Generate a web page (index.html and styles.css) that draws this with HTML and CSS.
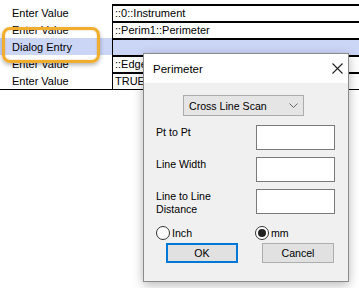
FILE: index.html
```html
<!DOCTYPE html>
<html lang="en">
<head>
  <meta charset="UTF-8">
  <title>Perimeter Dialog</title>
  <link rel="stylesheet" href="styles.css">
</head>
<body>
  <div class="grid">
    <div class="row">
      <div class="label">Enter Value</div>
      <div class="value">::0::Instrument</div>
    </div>
    <div class="row">
      <div class="label">Enter Value</div>
      <div class="value">::Perim1::Perimeter</div>
    </div>
    <div class="row selected">
      <div class="label">Dialog Entry</div>
      <div class="value"></div>
    </div>
    <div class="row">
      <div class="label">Enter Value</div>
      <div class="value">::Edge</div>
    </div>
    <div class="row last">
      <div class="label">Enter Value</div>
      <div class="value">TRUE</div>
    </div>
  </div>

  <div class="highlight"></div>

  <div class="dialog">
    <div class="titlebar">
      <span class="title">Perimeter</span>
      <svg class="close" width="11" height="11" viewBox="0 0 11 11">
        <path d="M0.5 0.5 L10.5 10.5 M10.5 0.5 L0.5 10.5" stroke="#222" stroke-width="1.1" fill="none"/>
      </svg>
    </div>
    <div class="dialog-body">
      <div class="combo">
        <span>Cross Line Scan</span>
        <svg width="9" height="5" viewBox="0 0 9 5">
          <path d="M0.5 0.5 L4.5 4.5 L8.5 0.5" stroke="#666" stroke-width="1" fill="none"/>
        </svg>
      </div>

      <div class="fields">
        <div class="field-label">Pt to Pt</div>
        <div class="textbox"></div>
        <div class="field-label">Line Width</div>
        <div class="textbox"></div>
        <div class="field-label">Line to Line<br>Distance</div>
        <div class="textbox"></div>
      </div>

      <div class="radios">
        <div class="radio"><span class="dot"></span>Inch</div>
        <div class="radio"><span class="dot checked"></span>mm</div>
      </div>

      <div class="buttons">
        <button class="btn default">OK</button>
        <button class="btn">Cancel</button>
      </div>
    </div>
  </div>
</body>
</html>
```

FILE: styles.css
```css
* { box-sizing: border-box; }

body {
  margin: 0;
  padding-top: 4px;
  background: #fff;
  color: #000;
  font-family: 'Liberation Sans', Arial, sans-serif;
  font-size: 11px;
  width: 359px;
  height: 288px;
  overflow: hidden;
  position: relative;
}

/* property grid */
.grid {
  border-bottom: 1px solid #000;
}

.row {
  display: grid;
  grid-template-columns: 112px 1fr;
  height: 17px;
}

.row .label {
  padding-left: 12px;
  padding-top: 3px;
  line-height: 13px;
}

.row .value {
  border-left: 1px solid #000;
  border-top: 2px solid #000;
  padding-left: 2px;
  padding-top: 1px;
  line-height: 13px;
}

.row.selected {
  background: #cbd5f6;
}

/* callout around the selected row */
.highlight {
  position: absolute;
  left: 2px;
  top: 27px;
  width: 98px;
  height: 36px;
  border: 3px solid #f1ae2e;
  border-radius: 8px;
  box-shadow: 0 2px 4px rgba(0, 0, 0, 0.3), inset 0 0 2px rgba(180, 110, 0, 0.4);
}

/* dialog window */
.dialog {
  position: absolute;
  left: 143px;
  top: 53px;
  width: 206px;
  height: 229px;
  border: 1px solid #8a8a8a;
  background: #f0f0f0;
  box-shadow: 0 3px 10px rgba(0, 0, 0, 0.28);
  display: flex;
  flex-direction: column;
}

.titlebar {
  height: 29px;
  background: #fff;
  display: flex;
  align-items: center;
  justify-content: space-between;
  padding: 0 5px 0 9px;
}

.title {
  font-size: 11.5px;
}

.dialog-body {
  padding: 12px 0 0 12px;
  font-size: 10.6px;
}

.combo {
  margin-left: 27px;
  width: 121px;
  height: 21px;
  background: #e5e5e5;
  border: 1px solid #acacac;
  display: flex;
  align-items: center;
  justify-content: space-between;
  padding: 0 5px 0 5px;
}

.fields {
  display: grid;
  grid-template-columns: 100px 79px;
  row-gap: 7px;
  margin-top: 9px;
}

.field-label {
  padding-top: 1px;
  line-height: 13px;
}

.textbox {
  height: 25px;
  background: #fff;
  border: 1px solid #7a7a7a;
}

.radios {
  display: grid;
  grid-template-columns: 99px 80px;
  margin-top: 10px;
  height: 14px;
}

.radio {
  display: flex;
  align-items: center;
  gap: 2px;
  line-height: 14px;
}

.dot {
  width: 14px;
  height: 14px;
  border-radius: 50%;
  border: 1px solid #333;
  background: #fff;
  display: flex;
  align-items: center;
  justify-content: center;
}

.dot.checked::after {
  content: "";
  width: 8px;
  height: 8px;
  border-radius: 50%;
  background: #222;
}

.buttons {
  display: flex;
  gap: 24px;
  margin-top: 3px;
  margin-left: 10px;
}

.btn {
  width: 72px;
  height: 20px;
  font-family: 'Liberation Sans', Arial, sans-serif;
  font-size: 10.6px;
  background: #e1e1e1;
  border: 1px solid #adadad;
  color: #000;
  padding: 0;
}

.btn.default {
  border: 2px solid #0078d7;
}
```
